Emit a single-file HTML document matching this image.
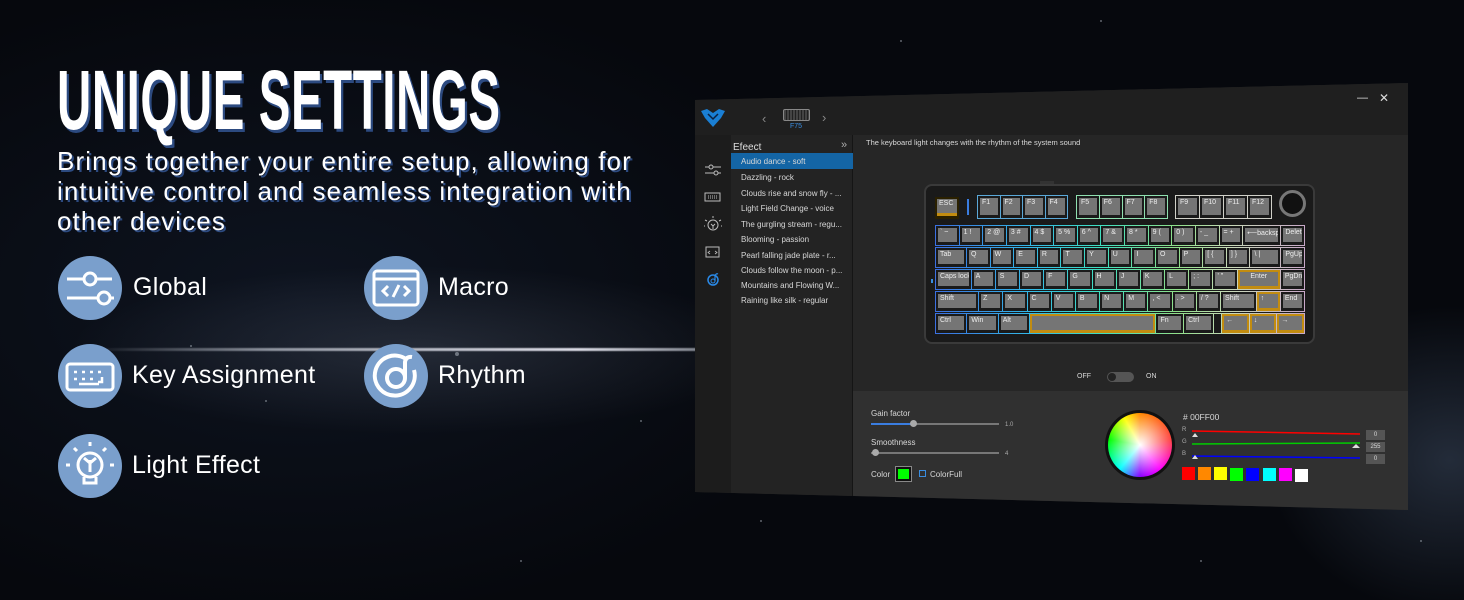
<!DOCTYPE html>
<html><head><meta charset="utf-8"><style>
*{margin:0;padding:0;box-sizing:border-box}
body{width:1464px;height:600px;overflow:hidden;position:relative;font-family:"Liberation Sans",sans-serif;
background:radial-gradient(ellipse 500px 120px at 420px 350px,rgba(120,130,150,.22),transparent 70%),radial-gradient(ellipse 260px 220px at 1450px 460px,rgba(90,110,140,.35),transparent 70%),radial-gradient(ellipse 700px 400px at 300px 300px,#0e1420,#06080d 80%);}
.a{position:absolute}
.streak{left:90px;top:348px;width:610px;height:3px;background:linear-gradient(90deg,transparent,rgba(220,225,235,.6) 30%,rgba(240,240,250,.9) 80%,rgba(200,205,215,.6));filter:blur(.6px)}
.star{position:absolute;width:2px;height:2px;border-radius:50%;background:#cfd6e0;opacity:.45}
h1{position:absolute;left:57px;top:58px;font-size:84px;font-weight:bold;color:#fff;letter-spacing:1px;transform:scaleX(.565);transform-origin:left top;text-shadow:4px 3px 0 #2c4a80;white-space:nowrap;line-height:1}
.sub{left:57px;top:146px;font-size:26px;letter-spacing:1.1px;line-height:30px;color:#fff;text-shadow:2px 2px 0 #2c4a80;width:590px}
.ic{position:absolute;width:64px;height:64px;border-radius:50%;background:#7a9fcc}
.ic svg{width:64px;height:64px}
.lb{position:absolute;font-size:25px;color:#fff;letter-spacing:.3px}
.panel{left:695px;top:83px;width:713px;height:427px;background:#262626;clip-path:polygon(0 17px,713px 0,713px 427px,0 409px)}
.t{position:absolute;color:#d8d8d8;font-size:8px;white-space:nowrap}
.kb{left:924px;top:184px;width:391px;height:160px;background:#1a1a1a;border:2px solid #3a3a3a;border-radius:8px}
.row{position:absolute;display:flex;height:21px;background:linear-gradient(90deg,#3b6fe0,#33b8e8 25%,#3fe0c0 45%,#8fe08a 65%,#c8d8b8 80%,#c8a8c8);padding:1px;gap:1px}
.k{background:#757575;border:2px solid #1a1a1a;border-bottom-width:3px;color:#eee;font-size:7px;padding:1px 2px;white-space:nowrap;overflow:hidden}
.y{background:#c28c10;border-color:#2a2000}
.y>span{display:block;background:#757575;height:100%;}
.sw{position:absolute;width:13px;height:13px}
</style></head><body>
<div class="a streak"></div>
<div class="star" style="left:455px;top:352px;width:4px;height:4px"></div>
<div class="star" style="left:190px;top:345px"></div><div class="star" style="left:265px;top:400px"></div>
<div class="star" style="left:640px;top:420px"></div>
<div class="star" style="left:520px;top:560px"></div>
<div class="star" style="left:1200px;top:560px"></div><div class="star" style="left:1420px;top:540px"></div>
<div class="star" style="left:900px;top:40px"></div><div class="star" style="left:1100px;top:20px"></div>
<div class="star" style="left:760px;top:520px"></div>

<h1>UNIQUE SETTINGS</h1>
<div class="a sub">Brings together your entire setup, allowing for intuitive control and seamless integration with other devices</div>

<div class="ic" style="left:58px;top:256px"><svg viewBox="0 0 64 64" fill="none" stroke="#fff" stroke-width="3"><path d="M9 23H26M38 23H54M9 42H40M52 42H56"/><circle cx="32" cy="23" r="6"/><circle cx="46" cy="42" r="6"/></svg></div>
<div class="lb" style="left:133px;top:273px">Global</div>
<div class="ic" style="left:364px;top:256px"><svg viewBox="0 0 64 64" fill="none" stroke="#fff" stroke-width="3"><rect x="10" y="15" width="44" height="34" rx="3"/><path d="M10 23H54M24 30l-5 5 5 5M40 30l5 5-5 5M35 29l-6 12"/></svg></div>
<div class="lb" style="left:438px;top:273px">Macro</div>
<div class="ic" style="left:58px;top:344px"><svg viewBox="0 0 64 64" fill="none" stroke="#fff" stroke-width="3"><rect x="9" y="20" width="46" height="26" rx="3"/><path d="M16 28h3M24 28h3M32 28h3M40 28h3M16 35h3M24 35h3M32 35h3M44 33v5h-4M21 40h20" stroke-width="2.5"/></svg></div>
<div class="lb" style="left:132px;top:361px">Key Assignment</div>
<div class="ic" style="left:364px;top:344px"><svg viewBox="0 0 64 64" fill="none" stroke="#fff" stroke-width="4"><path d="M42 15A20 20 0 1 0 50 26"/><circle cx="32" cy="34" r="9"/><path d="M41 34V18Q42 12 48 13"/></svg></div>
<div class="lb" style="left:438px;top:361px">Rhythm</div>
<div class="ic" style="left:58px;top:434px"><svg viewBox="0 0 64 64" fill="none" stroke="#fff" stroke-width="3"><circle cx="32" cy="31" r="12"/><path d="M26 43v6h12v-6M32 26v12M26 24l6 5 6-5M32 8v4M16 14l3 3M48 14l-3 3M8 31h4M52 31h4"/></svg></div>
<div class="lb" style="left:132px;top:451px">Light Effect</div>

<div class="a panel">
 <div class="a" style="left:0;top:0;width:713px;height:52px;background:#1f1f1f"></div>
 <div class="a" style="left:0;top:52px;width:36px;height:370px;background:#1c1c1c"></div>
 <div class="a" style="left:36px;top:52px;width:122px;height:370px;background:#232323;border-right:1px solid #151515"></div>
 <div class="a" style="left:158px;top:308px;width:555px;height:130px;background:#303030"></div>
</div>
<svg class="a" style="left:699px;top:108px" width="28" height="20" viewBox="0 0 28 20"><path d="M2 3L8 1 14 5 20 1 26 3 22 10 14 19 6 10Z" fill="#1a7fd4"/><path d="M9 6l5 5 5-5" stroke="#0a2040" fill="none" stroke-width="1.5"/></svg>
<div class="t" style="left:762px;top:111px;font-size:13px;color:#888">‹</div>
<div class="t" style="left:822px;top:110px;font-size:13px;color:#888">›</div>
<div class="a" style="left:783px;top:109px;width:27px;height:12px;border:1px solid #888;border-radius:2px;background:repeating-linear-gradient(90deg,#444 0 2px,#222 2px 3px)"></div>
<div class="t" style="left:790px;top:123px;color:#3a8de0;font-size:7px">F75</div>
<div class="t" style="left:1357px;top:92px;font-size:11px;color:#ddd">—</div>
<div class="t" style="left:1379px;top:91px;font-size:12px;color:#ddd">✕</div>

<svg class="a" style="left:703px;top:163px" width="20" height="130" viewBox="0 0 20 130" fill="none" stroke="#bbb" stroke-width="1"><path d="M2 4h16M2 10h16"/><circle cx="8" cy="4" r="2" fill="#1f1f1f"/><circle cx="13" cy="10" r="2" fill="#1f1f1f"/><rect x="2" y="30" width="15" height="8"/><path d="M5 33h9M5 35h9" stroke-dasharray="1 1"/><circle cx="10" cy="62" r="5"/><path d="M10 55v-2M4 58l-2-1M16 58l2-1M2 63h-1M18 63h1M8 61l2 2 2-2M10 63v3"/><rect x="3" y="84" width="13" height="10"/><path d="M7 88l-2 1.5 2 1.5M12 88l2 1.5-2 1.5" stroke-width=".8"/><circle cx="10" cy="117" r="5" stroke="#2a8ae8" stroke-width="1.5"/><circle cx="10" cy="118" r="2" stroke="#2a8ae8"/><path d="M12 118v-5q1-3 3-2" stroke="#2a8ae8" stroke-width="1.2"/></svg>

<div class="t" style="left:733px;top:142px;font-size:10px;color:#ddd">Efeect</div>
<div class="t" style="left:841px;top:139px;font-size:11px;color:#aaa">»</div>
<div class="a" style="left:731px;top:153px;width:122px;height:16px;background:#1465a5"></div>
<div class="t" style="left:741px;top:157px">Audio dance - soft</div>
<div class="t" style="left:741px;top:173px">Dazzling - rock</div>
<div class="t" style="left:741px;top:189px">Clouds rise and snow fly - ...</div>
<div class="t" style="left:741px;top:204px">Light Field Change - voice</div>
<div class="t" style="left:741px;top:220px">The gurgling stream - regu...</div>
<div class="t" style="left:741px;top:235px">Blooming - passion</div>
<div class="t" style="left:741px;top:251px">Pearl falling jade plate - r...</div>
<div class="t" style="left:741px;top:266px">Clouds follow the moon - p...</div>
<div class="t" style="left:741px;top:281px">Mountains and Flowing W...</div>
<div class="t" style="left:741px;top:296px">Raining like silk - regular</div>
<div class="t" style="left:866px;top:138px;font-size:7.5px">The keyboard light changes with the rhythm of the system sound</div>

<div class="a" style="left:1040px;top:181px;width:14px;height:4px;background:#333"></div>
<div class="a kb"></div>
<div class="a k y" style="left:935px;top:197px;width:24px;height:22px;padding:0"><span style="padding:1px 2px;height:14px">ESC</span></div>
<div class="a" style="left:967px;top:199px;width:2px;height:16px;background:#3a7de0"></div>
<div class="row" style="left:977px;top:195px;width:91px;height:24px;background:#5aa8d8"><div class="k" style="flex:1">F1</div><div class="k" style="flex:1">F2</div><div class="k" style="flex:1">F3</div><div class="k" style="flex:1">F4</div></div>
<div class="row" style="left:1076px;top:195px;width:92px;height:24px;background:#8fe0b0"><div class="k" style="flex:1">F5</div><div class="k" style="flex:1">F6</div><div class="k" style="flex:1">F7</div><div class="k" style="flex:1">F8</div></div>
<div class="row" style="left:1175px;top:195px;width:97px;height:24px;background:#d0d0c8"><div class="k" style="flex:1">F9</div><div class="k" style="flex:1">F10</div><div class="k" style="flex:1">F11</div><div class="k" style="flex:1">F12</div></div>
<div class="a" style="left:1279px;top:190px;width:27px;height:27px;border-radius:50%;background:#111;border:3px solid #777"></div>

<div class="row" style="left:935px;top:225px;width:370px"><div class="k" style="flex:1">` ~</div><div class="k" style="flex:1">1 !</div><div class="k" style="flex:1">2 @</div><div class="k" style="flex:1">3 #</div><div class="k" style="flex:1">4 $</div><div class="k" style="flex:1">5 %</div><div class="k" style="flex:1">6 ^</div><div class="k" style="flex:1">7 &amp;</div><div class="k" style="flex:1">8 *</div><div class="k" style="flex:1">9 (</div><div class="k" style="flex:1">0 )</div><div class="k" style="flex:1">- _</div><div class="k" style="flex:1">= +</div><div class="k" style="flex:2">⟵backspace</div><div class="k" style="flex:1">Delete</div></div>
<div class="row" style="left:935px;top:247px;width:370px"><div class="k" style="flex:1.5">Tab</div><div class="k" style="flex:1">Q</div><div class="k" style="flex:1">W</div><div class="k" style="flex:1">E</div><div class="k" style="flex:1">R</div><div class="k" style="flex:1">T</div><div class="k" style="flex:1">Y</div><div class="k" style="flex:1">U</div><div class="k" style="flex:1">I</div><div class="k" style="flex:1">O</div><div class="k" style="flex:1">P</div><div class="k" style="flex:1">[ {</div><div class="k" style="flex:1">] }</div><div class="k" style="flex:1.5">\ |</div><div class="k" style="flex:1">PgUp</div></div>
<div class="row" style="left:935px;top:269px;width:370px"><div class="k" style="flex:1.75">Caps lock</div><div class="k" style="flex:1">A</div><div class="k" style="flex:1">S</div><div class="k" style="flex:1">D</div><div class="k" style="flex:1">F</div><div class="k" style="flex:1">G</div><div class="k" style="flex:1">H</div><div class="k" style="flex:1">J</div><div class="k" style="flex:1">K</div><div class="k" style="flex:1">L</div><div class="k" style="flex:1">; :</div><div class="k" style="flex:1">' "</div><div class="k" style="flex:2.25;text-align:center;border-color:#c28c10">Enter</div><div class="k" style="flex:1">PgDn</div></div>
<div class="row" style="left:935px;top:291px;width:370px"><div class="k" style="flex:2.25">Shift</div><div class="k" style="flex:1">Z</div><div class="k" style="flex:1">X</div><div class="k" style="flex:1">C</div><div class="k" style="flex:1">V</div><div class="k" style="flex:1">B</div><div class="k" style="flex:1">N</div><div class="k" style="flex:1">M</div><div class="k" style="flex:1">, &lt;</div><div class="k" style="flex:1">. &gt;</div><div class="k" style="flex:1">/ ?</div><div class="k" style="flex:1.75">Shift</div><div class="k" style="flex:1;border-color:#c28c10">↑</div><div class="k" style="flex:1">End</div></div>
<div class="row" style="left:935px;top:313px;width:370px"><div class="k" style="flex:1.2">Ctrl</div><div class="k" style="flex:1.2">Win</div><div class="k" style="flex:1.2">Alt</div><div class="k" style="flex:6.3;border-color:#c28c10">&nbsp;</div><div class="k" style="flex:1">Fn</div><div class="k" style="flex:1.1">Ctrl</div><div style="flex:.4;background:#1a1a1a"></div><div class="k" style="flex:1;border-color:#c28c10">←</div><div class="k" style="flex:1;border-color:#c28c10">↓</div><div class="k" style="flex:1;border-color:#c28c10">→</div></div>
<div class="a" style="left:931px;top:279px;width:2px;height:4px;background:#3a8de0"></div>

<div class="t" style="left:1077px;top:373px;font-size:7px">OFF</div>
<div class="a" style="left:1107px;top:372px;width:27px;height:10px;border-radius:5px;background:#555"></div>
<div class="a" style="left:1108px;top:373px;width:8px;height:8px;border-radius:50%;background:#222"></div>
<div class="t" style="left:1146px;top:373px;font-size:7px">ON</div>

<div class="t" style="left:871px;top:409px">Gain factor</div>
<div class="a" style="left:871px;top:423px;width:128px;height:2px;background:#777"></div>
<div class="a" style="left:871px;top:423px;width:42px;height:2px;background:#3a7de0"></div>
<div class="a" style="left:910px;top:420px;width:7px;height:7px;border-radius:50%;background:#aaa"></div>
<div class="t" style="left:1005px;top:422px;font-size:6px;color:#aaa">1.0</div>
<div class="t" style="left:871px;top:438px">Smoothness</div>
<div class="a" style="left:871px;top:452px;width:128px;height:2px;background:#777"></div>
<div class="a" style="left:872px;top:449px;width:7px;height:7px;border-radius:50%;background:#aaa"></div>
<div class="t" style="left:1005px;top:451px;font-size:6px;color:#aaa">4</div>
<div class="t" style="left:871px;top:470px">Color</div>
<div class="a" style="left:896px;top:467px;width:15px;height:14px;background:#0f0;border:2px solid #111;outline:1px solid #888"></div>
<div class="a" style="left:919px;top:470px;width:7px;height:7px;border:1px solid #3a8de0"></div>
<div class="t" style="left:930px;top:470px">ColorFull</div>

<div class="a" style="left:1105px;top:410px;width:70px;height:70px;border-radius:50%;background:#111"></div>
<div class="a" style="left:1108px;top:413px;width:64px;height:64px;border-radius:50%;background:radial-gradient(circle,#fff,rgba(255,255,255,0) 70%),conic-gradient(from 0deg,#f80,#f44 80deg,#f0f 140deg,#80f 180deg,#0ff 220deg,#0f0 280deg,#ff0 330deg,#f80)"></div>
<div class="t" style="left:1183px;top:412px;font-size:8.5px">#&nbsp;00FF00</div>
<div class="t" style="left:1182px;top:427px;font-size:6px;color:#aaa">R</div>
<div class="t" style="left:1182px;top:439px;font-size:6px;color:#aaa">G</div>
<div class="t" style="left:1182px;top:451px;font-size:6px;color:#aaa">B</div>
<svg class="a" style="left:1190px;top:428px" width="175" height="36"><path d="M2 3L170 6" stroke="#f00" stroke-width="1.5"/><path d="M2 16L170 15" stroke="#0c0" stroke-width="1.5"/><path d="M2 28L170 30" stroke="#00f" stroke-width="1.5"/><path d="M2 9l3-4 3 4zM162 20l4-4 4 4zM2 31l3-4 3 4z" fill="#ddd"/></svg>
<div class="a t" style="left:1366px;top:430px;width:19px;height:10px;background:#555;text-align:center;font-size:6px;line-height:10px">0</div>
<div class="a t" style="left:1366px;top:442px;width:19px;height:10px;background:#555;text-align:center;font-size:6px;line-height:10px">255</div>
<div class="a t" style="left:1366px;top:454px;width:19px;height:10px;background:#555;text-align:center;font-size:6px;line-height:10px">0</div>
<div class="sw" style="left:1182px;top:467px;background:#f00"></div>
<div class="sw" style="left:1198px;top:467px;background:#f80"></div>
<div class="sw" style="left:1214px;top:467px;background:#ff0"></div>
<div class="sw" style="left:1230px;top:468px;background:#0f0"></div>
<div class="sw" style="left:1246px;top:468px;background:#00f"></div>
<div class="sw" style="left:1263px;top:468px;background:#0ff"></div>
<div class="sw" style="left:1279px;top:468px;background:#f0f"></div>
<div class="sw" style="left:1295px;top:469px;background:#fff"></div>
</body></html>
